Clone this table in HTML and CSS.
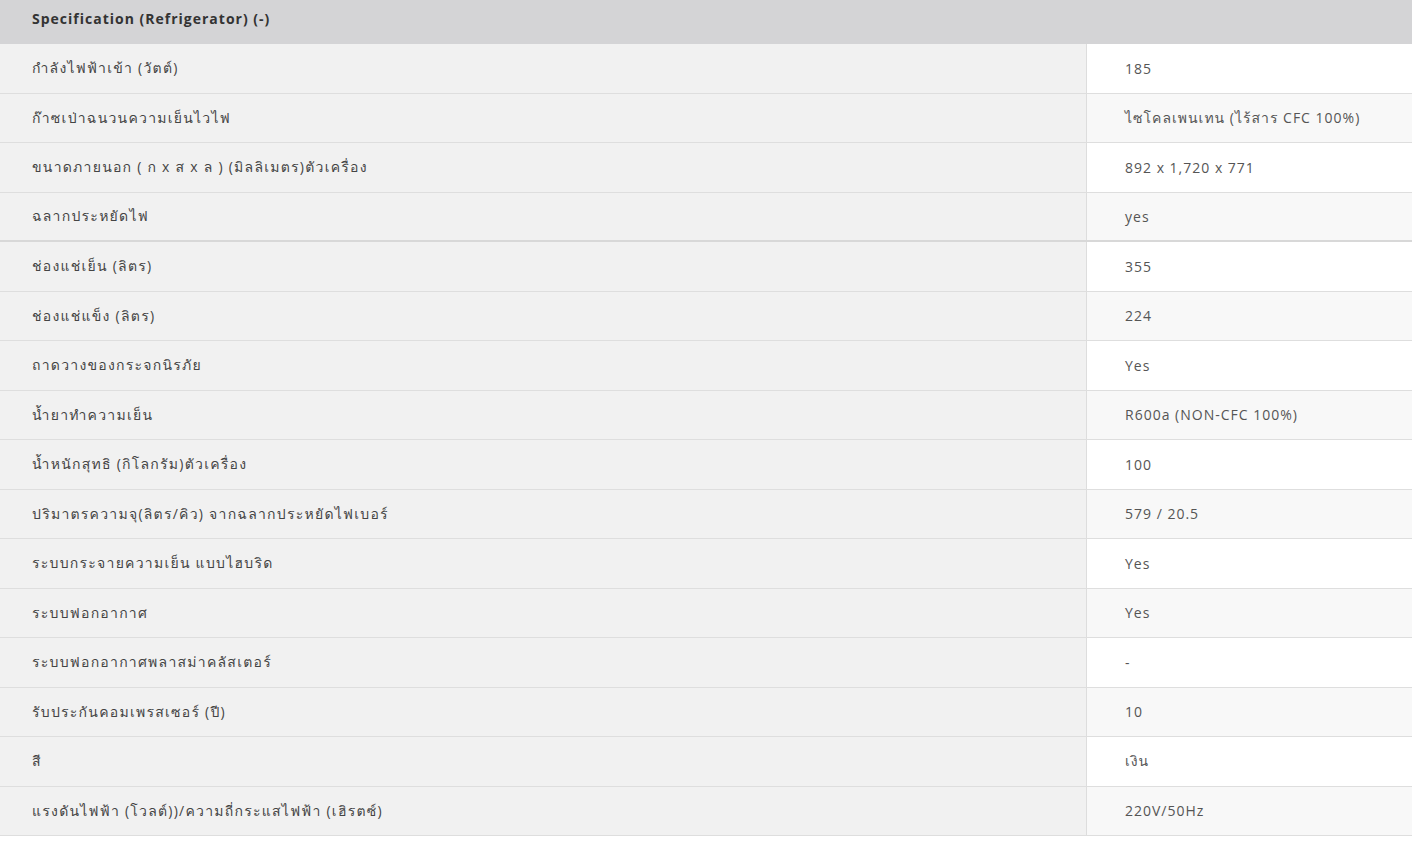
FILE: index.html
```html
<!DOCTYPE html>
<html lang="th">
<head>
<meta charset="utf-8">
<title>Specification (Refrigerator)</title>
<link rel="stylesheet" href="styles.css">
</head>
<body>
<section class="spec">
  <div class="spec-head">Specification (Refrigerator) (-)</div>
  <div class="spec-row"><div class="spec-label">กำลังไฟฟ้าเข้า (วัตต์)</div><div class="spec-value">185</div></div>
  <div class="spec-row"><div class="spec-label">ก๊าซเป่าฉนวนความเย็นไวไฟ</div><div class="spec-value">ไซโคลเพนเทน (ไร้สาร CFC 100%)</div></div>
  <div class="spec-row"><div class="spec-label">ขนาดภายนอก ( ก x ส x ล ) (มิลลิเมตร)ตัวเครื่อง</div><div class="spec-value">892 x 1,720 x 771</div></div>
  <div class="spec-row spec-row--divider"><div class="spec-label">ฉลากประหยัดไฟ</div><div class="spec-value">yes</div></div>
  <div class="spec-row"><div class="spec-label">ช่องแช่เย็น (ลิตร)</div><div class="spec-value">355</div></div>
  <div class="spec-row"><div class="spec-label">ช่องแช่แข็ง (ลิตร)</div><div class="spec-value">224</div></div>
  <div class="spec-row"><div class="spec-label">ถาดวางของกระจกนิรภัย</div><div class="spec-value">Yes</div></div>
  <div class="spec-row"><div class="spec-label">น้ำยาทำความเย็น</div><div class="spec-value">R600a (NON-CFC 100%)</div></div>
  <div class="spec-row"><div class="spec-label">น้ำหนักสุทธิ (กิโลกรัม)ตัวเครื่อง</div><div class="spec-value">100</div></div>
  <div class="spec-row"><div class="spec-label">ปริมาตรความจุ(ลิตร/คิว) จากฉลากประหยัดไฟเบอร์</div><div class="spec-value">579 / 20.5</div></div>
  <div class="spec-row"><div class="spec-label">ระบบกระจายความเย็น แบบไฮบริด</div><div class="spec-value">Yes</div></div>
  <div class="spec-row"><div class="spec-label">ระบบฟอกอากาศ</div><div class="spec-value">Yes</div></div>
  <div class="spec-row"><div class="spec-label">ระบบฟอกอากาศพลาสม่าคลัสเตอร์</div><div class="spec-value">-</div></div>
  <div class="spec-row"><div class="spec-label">รับประกันคอมเพรสเซอร์ (ปี)</div><div class="spec-value">10</div></div>
  <div class="spec-row"><div class="spec-label">สี</div><div class="spec-value">เงิน</div></div>
  <div class="spec-row"><div class="spec-label">แรงดันไฟฟ้า (โวลต์))/ความถี่กระแสไฟฟ้า (เฮิรตซ์)</div><div class="spec-value">220V/50Hz</div></div>
</section>
</body>
</html>
```
FILE: styles.css
```css
html, body {
  margin: 0;
  padding: 0;
  background: #ffffff;
}

body {
  font-family: "Open Sans", "Loma", "Tlwg Typo", "Garuda", "Noto Sans Thai Looped", "Noto Sans Thai", "Noto Sans", sans-serif;
  font-size: 14px;
  color: #444444;
}

.spec {
  width: 1412px;
}

.spec-head {
  height: 44px;
  box-sizing: border-box;
  display: flex;
  align-items: center;
  padding: 0 0 8px 32px;
  background: #d4d4d6;
  font-weight: 700;
  letter-spacing: 1px;
  color: #333333;
  font-size: 14px;
}

.spec-row {
  display: grid;
  grid-template-columns: 1087px 1fr;
  height: 49.5px;
  box-sizing: border-box;
  border-bottom: 1px solid #dedede;
}

.spec-row--divider {
  border-bottom: 2px solid #d8d8d8;
}

.spec-label,
.spec-value {
  display: flex;
  align-items: center;
  letter-spacing: 1px;
}

.spec-label {
  padding-left: 32px;
  background: #f1f1f1;
  border-right: 1px solid #dddddd;
  color: #444444;
  letter-spacing: 1.25px;
}

.spec-value {
  padding-left: 38px;
  background: #ffffff;
  color: #555555;
}

.spec-row:nth-of-type(odd) .spec-value {
  background: #f8f8f8;
}
```
